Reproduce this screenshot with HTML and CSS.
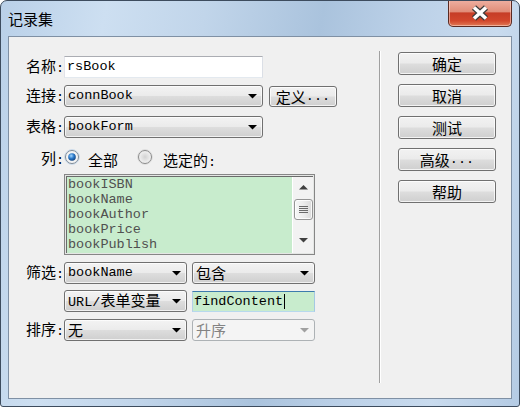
FILE: index.html
```html
<!DOCTYPE html>
<html>
<head>
<meta charset="utf-8">
<title>记录集</title>
<link rel="stylesheet" href="styles.css">
</head>
<body>
<div class="window">
  <div class="titlebar">
    <span class="title">记录集</span>
    <div class="close">
      <svg width="20" height="16" viewBox="0 0 20 16">
        <path d="M4 2.5 L16 13.5 M16 2.5 L4 13.5" stroke="#3a3a3a" stroke-width="6" fill="none"/>
        <path d="M4 2.5 L16 13.5 M16 2.5 L4 13.5" stroke="#ffffff" stroke-width="3.6" fill="none"/>
      </svg>
    </div>
  </div>
  <div class="client">
    <div class="form">
      <div class="row r-name">
        <span class="lbl">名称<span class="m">:</span></span>
        <div class="textbox w-long"><span class="m">rsBook</span></div>
      </div>
      <div class="row r-conn">
        <span class="lbl">连接<span class="m">:</span></span>
        <div class="select w-long"><span class="m">connBook</span><svg class="arrow" width="9" height="5" viewBox="0 0 9 5"><polygon points="0,0 9,0 4.5,4.5" fill="#000"/></svg></div>
        <div class="btn btn-def">定义<span class="m">...</span></div>
      </div>
      <div class="row r-table">
        <span class="lbl">表格<span class="m">:</span></span>
        <div class="select w-long"><span class="m">bookForm</span><svg class="arrow" width="9" height="5" viewBox="0 0 9 5"><polygon points="0,0 9,0 4.5,4.5" fill="#000"/></svg></div>
      </div>
      <div class="row r-cols">
        <span class="lbl lbl-top">列<span class="m">:</span></span>
        <svg class="radio" width="16" height="16" viewBox="0 0 16 16">
          <defs>
            <radialGradient id="rg1" cx="0.5" cy="0.5" r="0.6"><stop offset="0" stop-color="#e2e2e2"/><stop offset="1" stop-color="#ffffff"/></radialGradient>
            <radialGradient id="dot" cx="0.4" cy="0.35" r="0.7"><stop offset="0" stop-color="#a6d8ff"/><stop offset="0.5" stop-color="#2b79c9"/><stop offset="1" stop-color="#0f3f7a"/></radialGradient>
          </defs>
          <circle cx="8" cy="8" r="7.4" fill="none" stroke="#c9d9ea" stroke-width="1"/>
          <circle cx="8" cy="8" r="6.5" fill="url(#rg1)" stroke="#7e8a96" stroke-width="1"/>
          <circle cx="8" cy="8" r="3.8" fill="url(#dot)"/>
        </svg>
        <span class="rtext rt1">全部</span>
        <svg class="radio" width="16" height="16" viewBox="0 0 16 16">
          <defs>
            <radialGradient id="rg2" cx="0.5" cy="0.5" r="0.6"><stop offset="0" stop-color="#d2d2d2"/><stop offset="1" stop-color="#fafafa"/></radialGradient>
          </defs>
          <circle cx="8" cy="8" r="7.4" fill="none" stroke="#dcdcdc" stroke-width="1"/>
          <circle cx="8" cy="8" r="6.5" fill="url(#rg2)" stroke="#8a8a8a" stroke-width="1"/>
        </svg>
        <span class="rtext rt2">选定的<span class="m">:</span></span>
      </div>
      <div class="row r-list">
        <div class="listbox">
          <div class="listinner">
            <div class="items">
              <div class="item m">bookISBN</div>
              <div class="item m">bookName</div>
              <div class="item m">bookAuthor</div>
              <div class="item m">bookPrice</div>
              <div class="item m">bookPublish</div>
            </div>
            <div class="scrollbar">
              <div class="sb-btn"><svg width="9" height="5" viewBox="0 0 9 5"><polygon points="0,4.5 9,4.5 4.5,0" fill="#404040"/></svg></div>
              <div class="thumb">
                <svg width="9" height="9" viewBox="0 0 9 9"><path d="M0 1.5H9M0 3.5H9M0 5.5H9M0 7.5H9" stroke="#6a6a6a" stroke-width="1"/></svg>
              </div>
              <div class="track"></div>
              <div class="sb-btn sb-down"><svg width="9" height="5" viewBox="0 0 9 5"><polygon points="0,0 9,0 4.5,4.5" fill="#404040"/></svg></div>
            </div>
          </div>
        </div>
      </div>
      <div class="row r-filter">
        <span class="lbl">筛选<span class="m">:</span></span>
        <div class="select w-short"><span class="m">bookName</span><svg class="arrow" width="9" height="5" viewBox="0 0 9 5"><polygon points="0,0 9,0 4.5,4.5" fill="#000"/></svg></div>
        <div class="select w-short gap5"><span>包含</span><svg class="arrow" width="9" height="5" viewBox="0 0 9 5"><polygon points="0,0 9,0 4.5,4.5" fill="#000"/></svg></div>
      </div>
      <div class="row r-url">
        <span class="lbl"></span>
        <div class="select w-short"><span><span class="m">URL/</span>表单变量</span><svg class="arrow" width="9" height="5" viewBox="0 0 9 5"><polygon points="0,0 9,0 4.5,4.5" fill="#000"/></svg></div>
        <div class="textbox focus w-short gap5"><span class="m">findContent</span><span class="caret"></span></div>
      </div>
      <div class="row r-sort">
        <span class="lbl">排序<span class="m">:</span></span>
        <div class="select w-short"><span>无</span><svg class="arrow" width="9" height="5" viewBox="0 0 9 5"><polygon points="0,0 9,0 4.5,4.5" fill="#000"/></svg></div>
        <div class="select disabled w-short gap5"><span>升序</span><svg class="arrow" width="9" height="5" viewBox="0 0 9 5"><polygon points="0,0 9,0 4.5,4.5" fill="#a0a0a0"/></svg></div>
      </div>
    </div>
    <div class="sep"></div>
    <div class="buttons">
      <div class="btn btn-side">确定</div>
      <div class="btn btn-side">取消</div>
      <div class="btn btn-side">测试</div>
      <div class="btn btn-side">高级<span class="m">...</span></div>
      <div class="btn btn-side">帮助</div>
    </div>
  </div>
</div>
</body>
</html>
```

FILE: styles.css
```css
* { box-sizing: border-box; margin: 0; padding: 0; }
html, body { width: 520px; height: 407px; overflow: hidden; background: #ffffff; }
body {
  font-family: "Noto Sans CJK SC", "Liberation Sans", sans-serif;
  font-size: 15px;
  line-height: 16px;
  color: #000;
}
.m { font-family: "Liberation Mono", "Noto Sans CJK SC", monospace; font-size: 13.5px; }

.window {
  width: 520px;
  height: 407px;
  border: 1px solid #3d4c5e;
  border-radius: 7px 7px 3px 3px;
  background: linear-gradient(100deg, #b9d0e8 0%, #cddff1 18%, #c1d5ea 35%, #aac3dd 55%, #bcd1e8 70%, #c9dbee 85%, #b4cbe4 100%);
  display: flex;
  flex-direction: column;
  overflow: hidden;
}

.titlebar {
  height: 35px;
  display: flex;
  justify-content: space-between;
  align-items: flex-start;
}
.title {
  margin-top: 10px;
  margin-left: 7px;
  font-size: 15px;
  line-height: 16px;
}
.close {
  margin-top: -1px;
  margin-right: 7px;
  width: 64px;
  height: 27px;
  border: 1px solid #5a2a22;
  border-top: none;
  border-radius: 0 0 5px 5px;
  background: linear-gradient(#eeb0a2 0%, #e18d78 45%, #c63d26 50%, #d2472c 80%, #e07a56 100%);
  box-shadow: inset 0 0 0 1px rgba(255, 220, 210, 0.55);
  display: flex;
  align-items: center;
  justify-content: center;
}

.client {
  margin: 0 7px;
  height: 363px;
  border: 1px solid #7f90a4;
  background: #f0f0f0;
  display: flex;
}

.form {
  width: 361px;
  padding-top: 19px;
  display: flex;
  flex-direction: column;
}
.row { display: flex; align-items: center; }
.r-name { height: 22px; }
.r-conn { height: 22px; margin-top: 7px; }
.r-table { height: 22px; margin-top: 9px; }
.r-cols { height: 18px; margin-top: 11px; align-items: flex-start; }
.r-list { margin-top: 7px; padding-left: 55px; }
.r-filter { height: 22px; margin-top: 7px; }
.r-url { height: 22px; margin-top: 6px; }
.r-sort { height: 22px; margin-top: 7px; }

.lbl {
  width: 55px;
  flex: none;
  text-align: right;
  white-space: nowrap;
}
.lbl-top { margin-top: 1px; }

.w-long { width: 199px; }
.w-short { width: 123px; }
.gap5 { margin-left: 5px; }

.textbox {
  height: 22px;
  background: #fff;
  border: 1px solid;
  border-color: #abadb3 #dbdfe6 #e3e9ef #e2e3ea;
  padding-left: 2px;
  display: flex;
  align-items: center;
  white-space: nowrap;
}
.textbox.focus {
  height: 21px;
  align-self: flex-end;
  background: #c8eccd;
  border-color: #3d7bad #a4c9e3 #b7d9ed #b5cfe7;
  padding-left: 1px;
}
.caret {
  width: 1px;
  height: 15px;
  background: #000;
  margin-left: 1px;
}

.select {
  height: 22px;
  border: 1px solid #707070;
  border-radius: 3px;
  background: linear-gradient(#f3f3f3 0%, #ebebeb 48%, #dddddd 52%, #cfcfcf 100%);
  box-shadow: inset 0 0 0 1px rgba(255, 255, 255, 0.7);
  display: flex;
  align-items: center;
  justify-content: space-between;
  padding-left: 3px;
  padding-right: 5px;
  white-space: nowrap;
}
.select.disabled {
  border-color: #adb2b5;
  background: #f4f4f4;
  box-shadow: none;
  color: #838383;
}
.arrow { flex: none; }

.btn {
  border: 1px solid #707070;
  border-radius: 3px;
  background: linear-gradient(#f2f2f2 0%, #ebebeb 48%, #dddddd 52%, #cfcfcf 100%);
  box-shadow: inset 0 0 0 1px rgba(255, 255, 255, 0.75);
  display: flex;
  align-items: center;
  justify-content: center;
  white-space: nowrap;
}
.btn-def {
  width: 68px;
  height: 21px;
  margin-left: 6px;
  align-self: flex-end;
}
.btn-side { width: 98px; height: 23px; }

.radio { flex: none; margin-top: 0; }
.rtext { margin-top: 3px; white-space: nowrap; }
.rt1 { margin-left: 8px; margin-right: 19px; }
.rt2 { margin-left: 10px; }

.listbox {
  width: 251px;
  height: 81px;
  border: 1px solid #868686;
  padding: 1px;
  background: #e4e6e4;
}
.listinner {
  height: 100%;
  border-top: 1px solid #6b6b6b;
  border-left: 1px solid #6b6b6b;
  background: #c8eccd;
  display: flex;
}
.items { flex: 1; padding-left: 1px; }
.item { line-height: 15px; height: 15px; color: #505050; white-space: nowrap; }

.scrollbar {
  width: 21px;
  flex: none;
  background: #f2f2f2;
  border-left: 1px solid #ffffff;
  display: flex;
  flex-direction: column;
  align-items: center;
}
.sb-btn {
  height: 20px;
  width: 100%;
  display: flex;
  align-items: center;
  justify-content: center;
}
.sb-down { margin-bottom: 3px; }
.thumb {
  margin-top: 2px;
  width: 19px;
  height: 21px;
  border: 1px solid #959595;
  border-radius: 3px;
  background: linear-gradient(90deg, #f7f7f7 0%, #ececec 50%, #dadada 100%);
  box-shadow: inset 0 0 0 1px rgba(255, 255, 255, 0.8);
  display: flex;
  align-items: center;
  justify-content: center;
}
.track { flex: 1; }

.sep {
  width: 2px;
  margin-left: 9px;
  margin-top: 14px;
  height: 332px;
  border-left: 1px solid #a0a0a0;
  border-right: 1px solid #ffffff;
}

.buttons {
  margin-left: 17px;
  padding-top: 15px;
  display: flex;
  flex-direction: column;
  gap: 9px;
}
```
